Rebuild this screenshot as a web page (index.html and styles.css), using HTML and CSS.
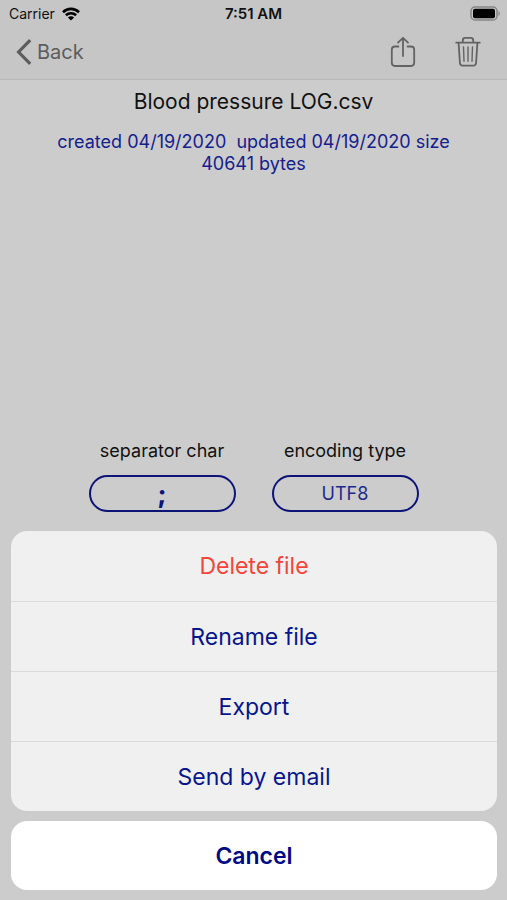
FILE: index.html
```
<!DOCTYPE html>
<html lang="en">
<head>
<meta charset="utf-8">
<meta name="viewport" content="width=device-width, initial-scale=1">
<title>Blood pressure LOG.csv</title>
<link rel="stylesheet" href="styles.css">
</head>
<body>
<header class="top">
  <div class="status">
    <div class="carrier">
      <span>Carrier</span>
      <svg width="18" height="14" viewBox="0 0 18 14" fill="none" stroke="#000" stroke-width="2.6" aria-hidden="true">
        <path d="M1 5.2a11.4 11.4 0 0 1 16 0"/>
        <path d="M3.9 8.3a7.3 7.3 0 0 1 10.2 0"/>
        <path d="M9 13.6 5.9 10.5a4.4 4.4 0 0 1 6.2 0z" fill="#000" stroke="none"/>
      </svg>
    </div>
    <span class="time">7:51 AM</span>
    <svg class="battery" width="31" height="15" viewBox="0 0 31 15" aria-hidden="true">
      <rect x="1" y="1" width="26" height="13" rx="4" fill="none" stroke="#858585" stroke-width="1.5"/>
      <rect x="3" y="2.7" width="22" height="9.6" rx="2" fill="#000"/>
      <path d="M28.5 5a3 3 0 0 1 0 5z" fill="#858585"/>
    </svg>
  </div>
  <nav class="bar">
    <a class="back" href="#">
      <svg width="16" height="26" viewBox="0 0 16 26" fill="none" stroke="currentColor" stroke-width="3.2" aria-hidden="true"><path d="M14.2 1.2 2.6 13l11.6 11.8"/></svg>
      Back
    </a>
    <div class="tools">
      <button class="tool" type="button" aria-label="Share">
        <svg width="26" height="32" viewBox="0 0 26 32" fill="none" stroke="currentColor" stroke-width="1.8" stroke-linecap="round" stroke-linejoin="round"><path d="M8.4 10.5H5a3.2 3.2 0 0 0-3.2 3.2v13.1A3.2 3.2 0 0 0 5 30h16a3.2 3.2 0 0 0 3.2-3.2V13.7a3.2 3.2 0 0 0-3.2-3.2h-3.4M13 20V2M8 6.6 13 1.8l5 4.8"/></svg>
      </button>
      <button class="tool" type="button" aria-label="Delete">
        <svg width="26" height="32" viewBox="0 0 26 32" fill="none" stroke="currentColor" stroke-width="1.8" stroke-linecap="round" stroke-linejoin="round"><path d="M1.2 6.7h23.6M7.8 6.5V4.2a2.4 2.4 0 0 1 2.4-2.4h5.6a2.4 2.4 0 0 1 2.4 2.4v2.3M3.6 7l1.3 19.8A2.8 2.8 0 0 0 7.7 29.6h10.6a2.8 2.8 0 0 0 2.8-2.8L22.4 7"/><path stroke-width="1.4" d="M8.5 11l.5 14.3M13 11v14.3M17.5 11l-.5 14.3"/></svg>
      </button>
    </div>
  </nav>
</header>
<main class="content">
  <h1>Blood pressure LOG.csv</h1>
  <p class="info">created 04/19/2020&nbsp; updated 04/19/2020 size 40641 bytes</p>
  <div class="options">
    <div class="option">
      <span id="sep">separator char</span>
      <button class="pill semi" type="button" aria-describedby="sep">;</button>
    </div>
    <div class="option">
      <span id="enc">encoding type</span>
      <button class="pill" type="button" aria-describedby="enc">UTF8</button>
    </div>
  </div>
</main>
<section class="sheet" aria-label="File actions">
  <div class="actions">
    <button class="action danger" type="button">Delete file</button>
    <button class="action" type="button">Rename file</button>
    <button class="action" type="button">Export</button>
    <button class="action" type="button">Send by email</button>
  </div>
  <button class="action cancel" type="button">Cancel</button>
</section>
</body>
</html>
```
FILE: styles.css
```
* {
  box-sizing: border-box;
}

body {
  margin: 0;
  min-height: 100vh;
  display: flex;
  flex-direction: column;
  background: #cccccc;
  color: #111;
  font-family: Inter, "Liberation Sans", sans-serif;
}

button {
  font: inherit;
  color: inherit;
  background: none;
  border: 0;
  padding: 0;
}

svg {
  display: block;
}

.top {
  background: #c6c6c6;
  border-bottom: 1px solid #b8b8b8;
}

.status {
  display: grid;
  grid-template-columns: 1fr auto 1fr;
  align-items: center;
  height: 27px;
  padding: 0 6px;
  font-size: 14px;
}

.carrier {
  display: flex;
  align-items: center;
  gap: 7px;
  padding-left: 3px;
}

.time {
  font-size: 15px;
  font-weight: 600;
}

.battery {
  justify-self: end;
}

.bar {
  display: flex;
  justify-content: space-between;
  height: 52px;
  padding: 0 26px 0 16px;
  color: #636363;
}

.back {
  display: flex;
  align-items: center;
  gap: 5px;
  height: 50px;
  color: #5c5c5c;
  font-size: 20px;
  text-decoration: none;
}

.tools {
  display: flex;
  align-items: center;
  gap: 39px;
  height: 50px;
}

.content {
  flex: 1;
  display: flex;
  flex-direction: column;
  align-items: center;
  padding: 8px 48px 19px;
}

h1 {
  margin: 0;
  font-size: 21px;
  font-weight: 400;
  line-height: 28px;
}

.info {
  margin: 15px 0 0;
  max-width: 410px;
  color: #14218c;
  font-size: 18px;
  line-height: 22px;
  text-align: center;
}

.options {
  display: flex;
  gap: 36px;
  margin-top: auto;
}

.option {
  display: flex;
  flex-direction: column;
  align-items: center;
  gap: 12px;
  font-size: 18px;
  line-height: 24px;
}

.pill {
  width: 147px;
  height: 37px;
  border: 2px solid #0c1478;
  border-radius: 19px;
  color: #1c2a8c;
}

.semi {
  color: #0c1478;
  font-size: 25px;
  font-weight: 800;
}

.sheet {
  display: flex;
  flex-direction: column;
  gap: 10px;
  padding: 0 10px 10px 11px;
}

.actions {
  overflow: hidden;
  border-radius: 16px;
  background: #f0f0f0;
}

.action {
  display: block;
  width: 100%;
  height: 70px;
  color: #07168c;
  font-size: 23px;
}

.action + .action {
  border-top: 1px solid #dadada;
}

.danger {
  color: #f5453a;
}

.cancel {
  height: 69px;
  border-radius: 16px;
  background: #fff;
  color: #000a86;
  font-weight: 600;
}
```
